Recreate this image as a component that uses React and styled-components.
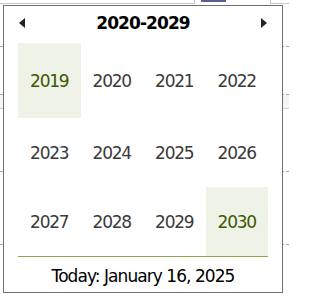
import React from "react";
import styled, { createGlobalStyle } from "styled-components";

const Global = createGlobalStyle`
  html, body { margin: 0; padding: 0; background: #fff; }
  body { width: 289px; height: 299px; overflow: hidden; font-family: "DejaVu Sans", Verdana, sans-serif; }
`;

const Page = styled.div`
  position: relative;
  width: 289px;
  height: 299px;
  overflow: hidden;
  background: #fff;
`;

const TopBar = styled.div`
  display: flex;
  height: 4px;
`;

const TopField = styled.div`
  box-sizing: border-box;
  width: ${(p) => p.$w}px;
  margin-left: ${(p) => p.$ml || 0}px;
  height: 4px;
  border-bottom: 1px solid #c8c8c8;
  border-right: ${(p) => (p.$right ? "1px solid #c8c8c8" : "none")};
  border-left: ${(p) => (p.$left ? "1px solid #c8c8c8" : "none")};
`;

const TopTab = styled.div`
  width: 25px;
  height: 2px;
  margin-left: ${(p) => p.$ml}px;
  background: #5a5d8f;
`;

const Rule = styled.div`
  margin-top: ${(p) => p.$mt}px;
  height: 0;
  border-top: 1px ${(p) => (p.$solid ? "solid #d0d0d0" : "dashed #a8a8a8")};
`;

const Band = styled.div`
  margin-top: ${(p) => p.$mt}px;
  height: ${(p) => p.$h}px;
  background: #f5f5f5;
`;

const Popup = styled.div`
  position: absolute;
  left: 3px;
  top: 5px;
  box-sizing: border-box;
  width: 280px;
  height: 288px;
  border: 1px solid #707070;
  background: #fff;
  padding: 0 14px;
  display: flex;
  flex-direction: column;
`;

const Header = styled.div`
  height: 34px;
  margin-bottom: 3px;
  display: flex;
  align-items: center;
  justify-content: space-between;
  padding: 0 1px;
`;

const NavButton = styled.button`
  border: 0;
  background: none;
  padding: 0;
  width: 6px;
  height: 10px;
  display: flex;
  cursor: pointer;
`;

const Title = styled.div`
  font-family: "DejaVu Sans", Verdana, sans-serif;
  font-weight: bold;
  font-size: 17px;
  letter-spacing: -0.9px;
  color: #000;
`;

const Grid = styled.div`
  display: grid;
  grid-template-columns: repeat(4, 1fr);
  grid-template-rows: 75px 69px 69px;
`;

const Cell = styled.div`
  display: flex;
  align-items: center;
  justify-content: center;
  font-family: "DejaVu Sans", Verdana, sans-serif;
  font-size: 17px;
  letter-spacing: -1.2px;
  color: ${(p) => (p.$other ? "#3d5800" : "#3a3a3a")};
  background: ${(p) => (p.$other ? "#eff2e7" : "transparent")};
`;

const Footer = styled.div`
  border-top: 1px solid #88a84c;
  flex: 1;
  display: flex;
  align-items: center;
  justify-content: center;
  padding-top: 3px;
  font-family: "DejaVu Sans", Verdana, sans-serif;
  font-size: 17px;
  letter-spacing: -0.95px;
  color: #000;
`;

const Arrow = ({ dir }) => (
  <svg width="6" height="10" viewBox="0 0 6 10">
    <polygon
      points={dir === "left" ? "6,0 6,10 0,5" : "0,0 0,10 6,5"}
      fill="#222"
    />
  </svg>
);

const years = [2019, 2020, 2021, 2022, 2023, 2024, 2025, 2026, 2027, 2028, 2029, 2030];

export default function App() {
  return (
    <Page>
      <Global />
      <TopBar>
        <TopField $w={195} $right />
        <TopTab $ml={6} />
        <TopField $w={19} $ml={44} $left />
      </TopBar>
      <Rule $mt={42} />
      <Rule $mt={47} />
      <Band $mt={0} $h={13} />
      <Rule $mt={0} $solid />
      <Rule $mt={62} />
      <Rule $mt={72} />
      <Popup>
        <Header>
          <NavButton aria-label="Previous">
            <Arrow dir="left" />
          </NavButton>
          <Title>2020-2029</Title>
          <NavButton aria-label="Next">
            <Arrow dir="right" />
          </NavButton>
        </Header>
        <Grid>
          {years.map((y) => (
            <Cell key={y} $other={y === 2019 || y === 2030}>
              {y}
            </Cell>
          ))}
        </Grid>
        <Footer>Today: January 16, 2025</Footer>
      </Popup>
    </Page>
  );
}
